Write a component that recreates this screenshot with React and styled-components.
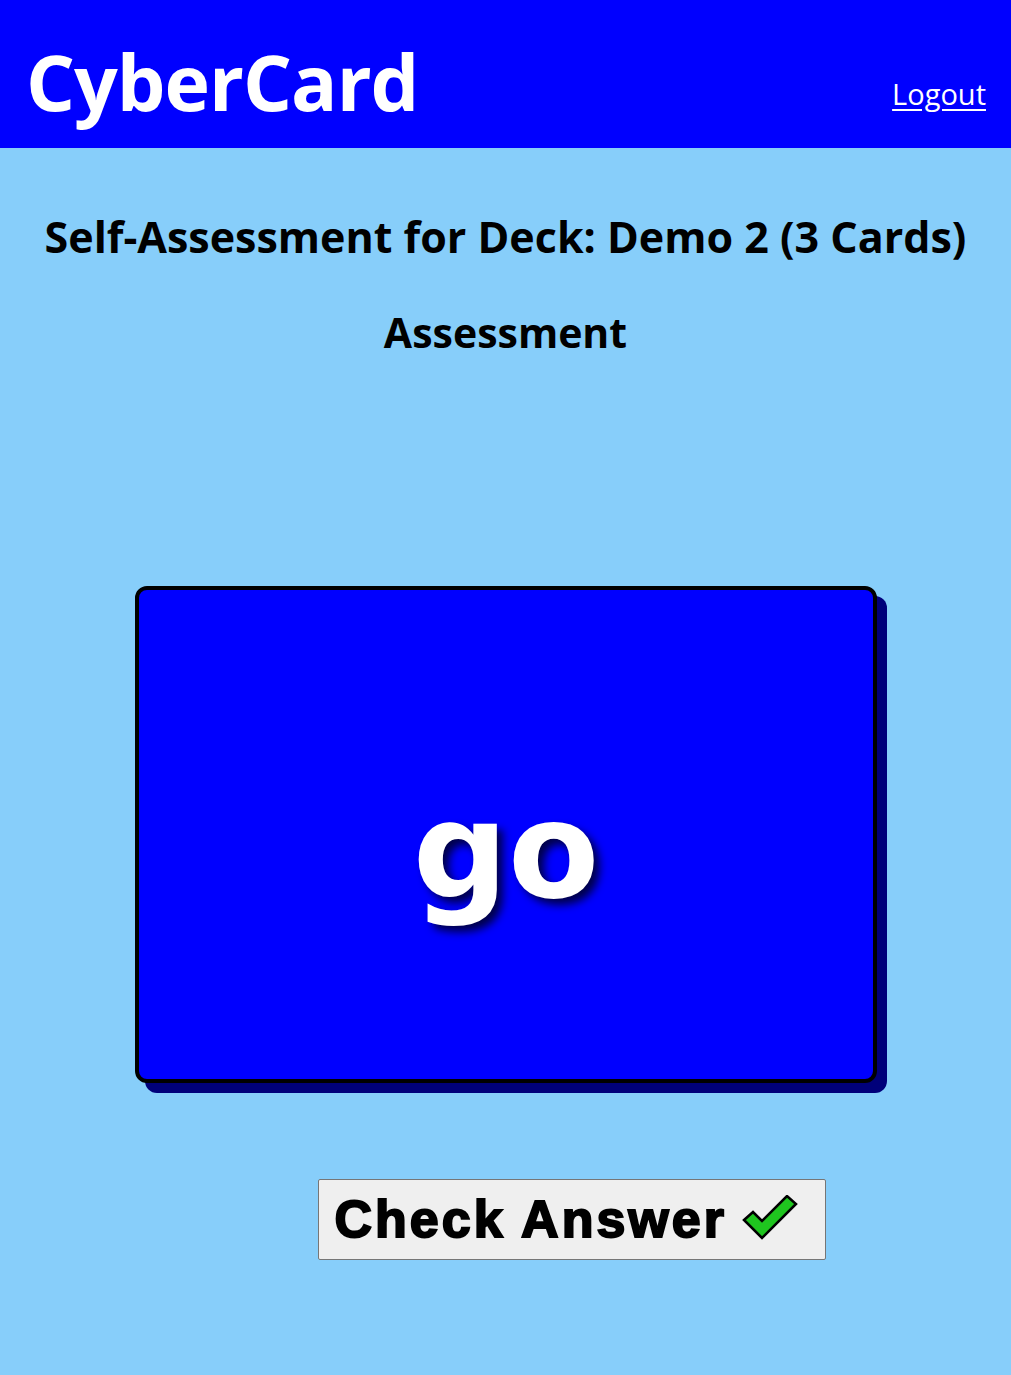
import React from 'react'
import styled, { createGlobalStyle } from 'styled-components'

const GlobalStyle = createGlobalStyle`
  html, body {
    margin: 0;
    padding: 0;
    background: #87cefa;
  }
  body {
    font-family: "Open Sans", "Noto Sans", sans-serif;
  }
`

class App extends React.PureComponent {
  render(){
    const deck = { name: 'Demo 2', count: 3 }
    return(
      <Main>
        <GlobalStyle />
        <Header>
          <Logo>CyberCard</Logo>
          <LogoutLink href="#">Logout</LogoutLink>
        </Header>
        <Content>
          <Title>Self-Assessment for Deck: {deck.name} ({deck.count} Cards)</Title>
          <SubTitle>Assessment</SubTitle>
          <CardArea>
            <FlashCard>
              <CardText>go</CardText>
            </FlashCard>
          </CardArea>
          <ButtonRow>
            <CheckButton>
              Check Answer
              <CheckIcon />
            </CheckButton>
          </ButtonRow>
        </Content>
      </Main>
    )
  }
}

const CheckIcon = () => (
  <svg width="58" height="48" viewBox="0 0 58 48">
    <path
      d="M3 25 L12 17 L21 26 L46 1 L55 9 L21 43 Z"
      fill="#1fc51f"
      stroke="#000"
      strokeWidth="2.5"
      strokeLinejoin="miter"
    />
  </svg>
)

const Main = styled.div`
  width: 100%;
  min-height: 1375px;
  background: #87cefa;
`

const Header = styled.header`
  height: 148px;
  background: #0000ff;
  display: flex;
  justify-content: space-between;
  align-items: flex-end;
  padding: 0 25px 28px 26px;
  box-sizing: border-box;
`

const Logo = styled.h1`
  margin: 0;
  color: #fff;
  font-size: 77px;
  font-weight: 700;
  letter-spacing: -1px;
  line-height: 1;
`

const LogoutLink = styled.a`
  color: #fff;
  font-size: 29px;
  line-height: 1;
  margin-bottom: 12px;
  text-decoration: underline;
  text-underline-offset: 4px;
`

const Content = styled.div`
  display: flex;
  flex-direction: column;
  align-items: center;
`

const Title = styled.h2`
  margin: 63px 0 0;
  font-size: 43px;
  font-weight: 700;
  color: #000;
  line-height: 1.2;
`

const SubTitle = styled.h3`
  margin: 45px 0 0;
  font-size: 41px;
  font-weight: 700;
  color: #000;
  line-height: 1.2;
`

const CardArea = styled.div`
  margin-top: 229px;
  width: 100%;
  display: flex;
  justify-content: center;
`

const FlashCard = styled.div`
  width: 742px;
  height: 497px;
  box-sizing: border-box;
  margin-left: 1px;
  background: #0000ff;
  border: 4px solid #000;
  border-radius: 12px;
  box-shadow: 10px 10px 0 #00007a;
  display: flex;
  align-items: center;
  justify-content: center;
`

const CardText = styled.span`
  color: #fff;
  font-family: "DejaVu Sans", sans-serif;
  font-weight: 700;
  font-size: 133px;
  line-height: 1;
  margin-top: 34px;
  text-shadow: 6px 6px 8px #00004a;
`

const ButtonRow = styled.div`
  margin-top: 96px;
  display: flex;
  justify-content: center;
  padding-left: 132px;
`

const CheckButton = styled.button`
  width: 508px;
  height: 81px;
  background: #efefef;
  border: 1px solid #767676;
  border-radius: 2px;
  display: flex;
  align-items: center;
  justify-content: flex-start;
  gap: 14px;
  font-family: "Liberation Sans", Arial, sans-serif;
  font-weight: 700;
  font-size: 52px;
  color: #000;
  -webkit-text-stroke: 2px #000;
  letter-spacing: 3px;
  padding: 0 0 0 16px;
`

export default App
